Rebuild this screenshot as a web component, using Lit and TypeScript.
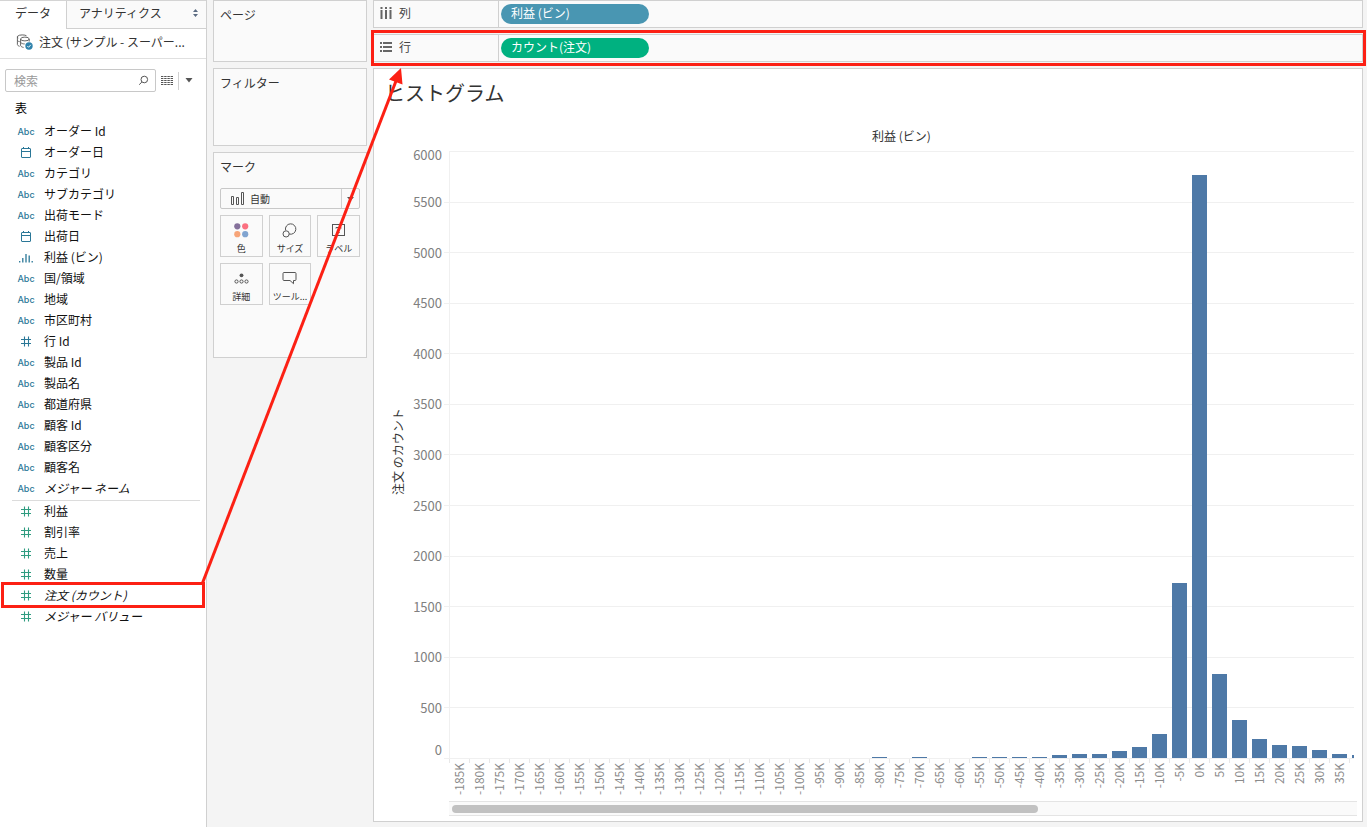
import { LitElement, html, svg, css, nothing } from "lit";
import { customElement, property } from "lit/decorators.js";
import { classMap } from "lit/directives/class-map.js";
import { styleMap } from "lit/directives/style-map.js";

type FieldKind = "text" | "date" | "bin" | "number";

interface Field {
  name: string;
  kind: FieldKind;
  generated?: boolean;
  marked?: boolean;
}

const DIMENSIONS: Field[] = [
  { name: "オーダー Id", kind: "text" },
  { name: "オーダー日", kind: "date" },
  { name: "カテゴリ", kind: "text" },
  { name: "サブカテゴリ", kind: "text" },
  { name: "出荷モード", kind: "text" },
  { name: "出荷日", kind: "date" },
  { name: "利益 (ビン)", kind: "bin" },
  { name: "国/領域", kind: "text" },
  { name: "地域", kind: "text" },
  { name: "市区町村", kind: "text" },
  { name: "行 Id", kind: "number" },
  { name: "製品 Id", kind: "text" },
  { name: "製品名", kind: "text" },
  { name: "都道府県", kind: "text" },
  { name: "顧客 Id", kind: "text" },
  { name: "顧客区分", kind: "text" },
  { name: "顧客名", kind: "text" },
  { name: "メジャー ネーム", kind: "text", generated: true },
];

const MEASURES: Field[] = [
  { name: "利益", kind: "number" },
  { name: "割引率", kind: "number" },
  { name: "売上", kind: "number" },
  { name: "数量", kind: "number" },
  { name: "注文 (カウント)", kind: "number", generated: true, marked: true },
  { name: "メジャー バリュー", kind: "number", generated: true },
];

const FIELD_ICONS = {
  text: html`<span class="abc">Abc</span>`,
  date: html`<svg width="16" height="16" viewBox="0 0 16 16" fill="none" stroke="currentColor">
    <rect x="3.5" y="4.5" width="9" height="9" rx=".5" /><path d="M3.500 7.500h9M5.500 3v1.500M10.500 3v1.500" />
  </svg>`,
  bin: html`<svg width="16" height="16" viewBox="0 0 16 16" fill="none" stroke="currentColor" stroke-width="1.3">
    <path d="M1.700 12v1.500M4.800 9v4.500M8 5v8.500M11.200 6.500v7M14.200 12v1.500" />
  </svg>`,
  number: html`<svg width="16" height="16" viewBox="0 0 16 16" fill="none" stroke="currentColor" stroke-width="1.1">
    <path d="M3 6.500h10M3 10.500h10M6.500 3.500v10M10.500 3.500v10" />
  </svg>`,
};

const BASE = css`
  :host { box-sizing: border-box; display: block; }
  *, *::before, *::after { box-sizing: border-box; }
  button, input, select { font: inherit; color: inherit; margin: 0; padding: 0; border: 0; background: none; border-radius: 0; }
  svg { display: block; flex: none; }
`;

@customElement("data-pane")
export class DataPane extends LitElement {
  static styles = [BASE, css`
    :host { background: #fff; border-right: 1px solid #d0d0d0; }
    .tabs { display: flex; height: 29px; border-top: 1px solid #d4d4d4; }
    .tab { height: 28px; padding: 0 15px 4px; color: #333; text-align: left; white-space: nowrap; }
    .tab.other { flex: 1; display: flex; align-items: center; justify-content: space-between; padding: 0 8px 4px 12px; background: #fafafa; border-left: 1px solid #d0d0d0; border-bottom: 1px solid #d0d0d0; }
    .source { display: flex; align-items: center; gap: 6px; height: 30px; padding: 0 16px 3px; border-bottom: 1px solid #e0e0e0; color: #333; white-space: nowrap; }
    .find { display: flex; align-items: center; padding: 10px 13px 0 5px; }
    .box { display: flex; flex: 1; min-width: 0; align-items: center; height: 23px; padding: 0 6px 0 8px; border: 1px solid #c8c8c8; border-radius: 2px; }
    .box input { flex: 1; min-width: 0; outline: none; }
    .box input::placeholder { color: #999; opacity: 1; }
    .view { padding: 0 5px; }
    .drop { height: 18px; padding: 0 0 0 6px; border-left: 1px solid #d0d0d0; }
    h2 { margin: 6px 0 2px 15px; font-size: 12px; font-weight: 400; line-height: 20px; color: #000; }
    ul { list-style: none; margin: 0; padding: 0; color: #2a7797; }
    .measures { color: #2f9c80; margin-top: -1px; }
    .rule { margin: 2px 6px 0 12px; border: 0; border-top: 1px solid #dcdcdc; }
    li { position: relative; display: flex; align-items: center; height: 21px; padding-left: 18px; gap: 10px; }
    .icon { display: flex; justify-content: center; width: 16px; }
    .abc { font: 500 9px/12px "Inter", sans-serif; padding-top: 3px; }
    .name { color: #111; white-space: nowrap; }
    .generated { font-style: italic; }
    .marked::after { content: ""; position: absolute; inset: -2px 1px -3px 1px; border: 3px solid #fc2014; }
  `];

  private row(f: Field) {
    return html`<li class=${classMap({ marked: !!f.marked })}>
      <span class="icon">${FIELD_ICONS[f.kind]}</span>
      <span class=${classMap({ name: true, generated: !!f.generated })}>${f.name}</span>
    </li>`;
  }

  render() {
    return html`
      <div class="tabs" role="tablist">
        <button class="tab" role="tab" aria-selected="true">データ</button>
        <button class="tab other" role="tab" aria-selected="false">アナリティクス
          <svg width="5" height="8" viewBox="0 0 5 8" fill="#5b6b82"><path d="M2.500 0L5 3H0zM0 5h5L2.500 8z" /></svg>
        </button>
      </div>
      <div class="source">
        <svg width="17" height="16" viewBox="0 0 17 16" fill="none" stroke="#555" stroke-width=".9">
          <path d="M10.500 1.800C9.400.7 3.200.4 1.600 2.200c-.3.900 0 1.600.6 2M1.400 2.500v8c.2 1 1.100 1.500 2.200 1.800M1.500 6.500c.4.700 1.200 1 2.200 1.200" />
          <ellipse cx="8.900" cy="5" rx="4.300" ry="1.900" />
          <path d="M4.600 5v6.600c.3.900 1.400 1.600 3 1.800M13.200 5v2.600M4.700 8.500c1 1 2.300 1.500 4 1.400" />
          <circle cx="13" cy="12" r="3.700" fill="#2f82ab" stroke="none" />
          <path d="M11.300 12l1.300 1.300 2.200-2.500" stroke="#fff" />
        </svg>
        <span>注文 (サンプル - スーパー...</span>
      </div>
      <div class="find">
        <div class="box">
          <input type="text" placeholder="検索" aria-label="検索" />
          <svg width="11" height="11" viewBox="0 0 11 11" fill="none" stroke="#555"><circle cx="6.300" cy="4.500" r="3.300" /><path d="M3.900 7L1.200 9.700" /></svg>
        </div>
        <button class="view" aria-label="表示">
          <svg width="12" height="10" viewBox="0 0 12 10" stroke="#555" stroke-dasharray="2.400 .8"><path d="M0 .5h12M0 2.500h12M0 4.500h12M0 6.500h12M0 8.500h12" /></svg>
        </button>
        <button class="drop" aria-label="メニュー">
          <svg width="8" height="5" viewBox="0 0 8 5" fill="#555"><path d="M.5 0h7L4 4.500z" /></svg>
        </button>
      </div>
      <h2>表</h2>
      <ul>${DIMENSIONS.map((f) => this.row(f))}</ul>
      <hr class="rule" />
      <ul class="measures">${MEASURES.map((f) => this.row(f))}</ul>
    `;
  }
}

const MARKS = [
  { label: "色", icon: svg`<g stroke="none"><circle cx="4.300" cy="4.300" r="3.100" fill="#85719b"/><circle cx="12.200" cy="4.300" r="3.100" fill="#fb7080"/><circle cx="4.300" cy="12.200" r="3.100" fill="#f7a579"/><circle cx="12.200" cy="12.200" r="3.100" fill="#80a4d0"/></g>` },
  { label: "サイズ", icon: svg`<path d="M4.600 8.300A5.200 5.200 0 1 1 8.100 12"/><circle cx="5.100" cy="11.900" r="3.100"/>` },
  { label: "ラベル", icon: svg`<rect x="2.500" y="2.500" width="12" height="11"/><path d="M6 6.500v-1h5v1M8.500 5.500v5M7.300 10.500h2.400"/>` },
  { label: "詳細", icon: svg`<circle cx="8.500" cy="5.300" r="1.900" fill="#555" stroke="none"/><circle cx="3.500" cy="11.500" r="1.600"/><circle cx="8.500" cy="11.500" r="1.600"/><circle cx="13.500" cy="11.500" r="1.600"/>` },
  { label: "ツール...", icon: svg`<path d="M3 2.500h11q1 0 1 1v6q0 1-1 1h-1.500v3.200L9 10.500H3q-1 0-1-1v-6q0-1 1-1z"/>` },
];

@customElement("card-column")
export class CardColumn extends LitElement {
  static styles = [BASE, css`
    :host { display: flex; flex-direction: column; gap: 6px; }
    section { padding: 4px 6px; background: #fafafa; border: 1px solid #d0d0d0; color: #333; }
    h2 { margin: 0; font-size: 12px; font-weight: 400; line-height: 20px; }
    .pages { min-height: 62px; }
    .filters { min-height: 78px; }
    .marks { min-height: 206px; }
    .type { display: flex; align-items: center; height: 21px; margin: 11px 0 6px; padding-left: 10px; border: 1px solid #c8c8c8; border-radius: 2px; font-size: 10px; }
    .picker { display: flex; flex: 1; align-items: stretch; height: 19px; }
    .picker select { flex: 1; min-width: 0; padding: 0 0 2px 6px; appearance: none; outline: none; }
    .arrow { display: flex; align-items: center; padding: 0 5px; border-left: 1px solid #d0d0d0; }
    .grid { display: grid; grid-template-columns: repeat(3, 1fr); gap: 6px; }
    .mark { display: flex; flex-direction: column; align-items: center; justify-content: space-between; height: 42px; padding: 6px 0 1px; border: 1px solid #d0d0d0; font-size: 9px; line-height: 13px; white-space: nowrap; }
  `];

  render() {
    return html`
      <section class="pages"><h2>ページ</h2></section>
      <section class="filters"><h2>フィルター</h2></section>
      <section class="marks">
        <h2>マーク</h2>
        <div class="type">
          <svg width="13" height="13" viewBox="0 0 13 13" fill="none" stroke="#555"><path d="M.5 4.500h2v8h-2zM5.500 5.500h2v7h-2zM10.500 .5h2v12h-2z" /></svg>
          <div class="picker">
            <select aria-label="マーク タイプ"><option>自動</option></select>
            <span class="arrow"><svg width="7" height="4" viewBox="0 0 7 4" fill="#555"><path d="M0 0h7L3.500 4z" /></svg></span>
          </div>
        </div>
        <div class="grid">
          ${MARKS.map((m) => html`<button class="mark">
            <svg width="17" height="17" viewBox="0 0 17 17" fill="none" stroke="#555">${m.icon}</svg>${m.label}
          </button>`)}
        </div>
      </section>
    `;
  }
}

@customElement("field-shelf")
export class FieldShelf extends LitElement {
  @property() name = "";
  @property() pill = "";
  @property() axis: "columns" | "rows" = "columns";

  static styles = [BASE, css`
    :host { display: flex; height: 28px; background: #fafafa; border: 1px solid #d0d0d0; }
    .head { display: flex; align-items: center; gap: 7px; width: 125px; padding: 0 0 2px 6px; border-right: 1px solid #d0d0d0; color: #444; }
    .pill { align-self: center; width: 148px; height: 20px; margin-left: 2px; padding: 0 10px 2px; border-radius: 10px; color: #fff; text-align: left; background: #4996b2; line-height: 18px; }
    .rows { background: #00b180; }
  `];

  render() {
    const icon = this.axis === "columns"
      ? svg`<path d="M.5 0h2v2h-2zM5 0h2v2H5zM9.500 0h2v2h-2zM.5 3h2v9h-2zM5 3h2v9H5zM9.500 3h2v9h-2z"/>`
      : svg`<path d="M0 1h2v2H0zM3 1h9v2H3zM0 5h2v2H0zM3 5h9v2H3zM0 9h2v2H0zM3 9h9v2H3z"/>`;
    return html`
      <div class="head"><svg width="12" height="12" viewBox="0 0 12 12" fill="#666">${icon}</svg>${this.name}</div>
      <button class=${classMap({ pill: true, rows: this.axis === "rows" })}>${this.pill}</button>
    `;
  }
}

const Y_MAX = 6000;
const Y_STEP = 500;
const Y_TICKS = Array.from({ length: Y_MAX / Y_STEP + 1 }, (_, i) => Y_MAX - i * Y_STEP);

// Record count per 5K profit bin, keyed by the bin's lower bound in thousands.
const COUNTS: Record<number, number> = {
  [-80]: 10, [-70]: 10, [-55]: 10, [-50]: 10, [-45]: 10, [-40]: 10, [-35]: 30, [-30]: 40, [-25]: 40,
  [-20]: 70, [-15]: 109, [-10]: 237, [-5]: 1730, 0: 5763, 5: 830, 10: 376, 15: 188, 20: 129,
  25: 119, 30: 79, 35: 40, 40: 30,
};
const BINS = Array.from({ length: 46 }, (_, i) => -185 + i * 5);

@customElement("histogram-sheet")
export class HistogramSheet extends LitElement {
  static styles = [BASE, css`
    :host { display: flex; flex-direction: column; min-height: 0; padding: 9px 5px 5px 12px; background: #fff; border: 1px solid #d0d0d0; }
    h1 { margin: 0 0 0 -1px; font-size: 20px; font-weight: 400; line-height: 30px; color: #333; }
    .chart { flex: 1; min-height: 0; display: grid; grid-template: 43px minmax(0, 1fr) 42px 15px / 24px 39px minmax(0, 1fr); }
    .field { grid-column: 3; align-self: end; padding: 0 3px 5px 0; line-height: 20px; text-align: center; color: #333; }
    .ytitle { grid-area: 2 / 1; display: flex; align-items: center; justify-content: center; padding-top: 6px; writing-mode: vertical-rl; text-orientation: sideways; transform: rotate(180deg); color: #333; line-height: 24px; white-space: nowrap; }
    .yaxis { grid-area: 2 / 2; display: flex; flex-direction: column; justify-content: space-between; color: #808080; font-size: 13px; }
    .ytick { display: flex; height: 1px; align-items: center; justify-content: flex-end; gap: 2px; line-height: 16px; }
    .ytick::after { content: ""; width: 5px; height: 1px; background: #f0f0f0; }
    .ytick:first-child { align-items: flex-start; line-height: 8px; }
    .ytick:last-child { align-items: flex-end; line-height: 18px; }
    .ytick:first-child::after { background: none; }
    .grid, .bars { grid-area: 2 / 3; display: flex; margin-right: 3px; }
    .grid { flex-direction: column; justify-content: space-between; border-left: 1px solid #f0f0f0; }
    .line { height: 1px; background: #f0f0f0; }
    .bars { align-items: flex-end; overflow: hidden; padding-bottom: 1px; }
    .band { flex: none; display: flex; align-items: flex-end; width: 20px; height: 100%; padding-left: 3px; }
    .bar { width: 15px; background: #4e79a7; }
    .xaxis { grid-area: 3 / 3; display: flex; margin-right: 3px; overflow: hidden; color: #8a8a8a; }
    .xtick { flex: none; width: 20px; }
    .xtick::before { content: ""; display: block; width: 1px; height: 4px; background: #e8e8e8; }
    .xlabel { display: block; width: 20px; writing-mode: vertical-rl; transform: rotate(180deg); line-height: 20px; text-align: right; white-space: nowrap; }
    .scroll { grid-area: 4 / 3; padding: 3px; background: #fafafa; border-top: 1px solid #e4e4e4; border-bottom: 1px solid #e4e4e4; }
    .thumb { width: 65%; height: 8px; border-radius: 4px; background: #c1c1c1; }
  `];

  render() {
    return html`
      <h1>ヒストグラム</h1>
      <div class="chart">
        <div class="field">利益 (ビン)</div>
        <div class="ytitle">注文 のカウント</div>
        <div class="yaxis">${Y_TICKS.map((v) => html`<div class="ytick">${v}</div>`)}</div>
        <div class="grid">${Y_TICKS.map(() => html`<div class="line"></div>`)}</div>
        <div class="bars">
          ${BINS.map((b) => html`<div class="band">${COUNTS[b]
            ? html`<div class="bar" style=${styleMap({ height: `${(COUNTS[b] / Y_MAX) * 100}%` })}></div>`
            : nothing}</div>`)}
        </div>
        <div class="xaxis">
          ${BINS.map((b) => html`<div class="xtick">${b < 40 ? html`<span class="xlabel">${b}K</span>` : nothing}</div>`)}
        </div>
        <div class="scroll"><div class="thumb"></div></div>
      </div>
    `;
  }
}

@customElement("app-root")
export class AppRoot extends LitElement {
  static styles = [BASE, css`
    :host {
      position: relative;
      display: grid;
      grid-template-columns: 207px 154px minmax(0, 1fr);
      gap: 6px;
      height: 100vh;
      min-height: 640px;
      padding-right: 4px;
      overflow: hidden;
      background: #f4f4f4;
      font: 12px/20px "Noto Sans CJK JP", sans-serif;
    }
    main { display: flex; flex-direction: column; gap: 6px; min-width: 0; min-height: 0; padding-bottom: 5px; }
    .target { position: relative; }
    .target::after { content: ""; position: absolute; inset: -4px -3px -4px -2px; border: 3px solid #fc2014; }
    histogram-sheet { flex: 1; }
    .arrow { position: absolute; top: 0; left: 0; pointer-events: none; }
  `];

  render() {
    return html`
      <data-pane></data-pane>
      <card-column></card-column>
      <main>
        <field-shelf name="列" pill="利益 (ビン)" axis="columns"></field-shelf>
        <div class="target"><field-shelf name="行" pill="カウント(注文)" axis="rows"></field-shelf></div>
        <histogram-sheet></histogram-sheet>
      </main>
      <svg class="arrow" width="410" height="600" viewBox="0 0 410 600" aria-hidden="true">
        <path d="M202.500 583L396 81" stroke="#fc2014" stroke-width="3" fill="none" />
        <path d="M401 68L389 79.500L402.500 84.500z" fill="#fc2014" />
      </svg>
    `;
  }
}
